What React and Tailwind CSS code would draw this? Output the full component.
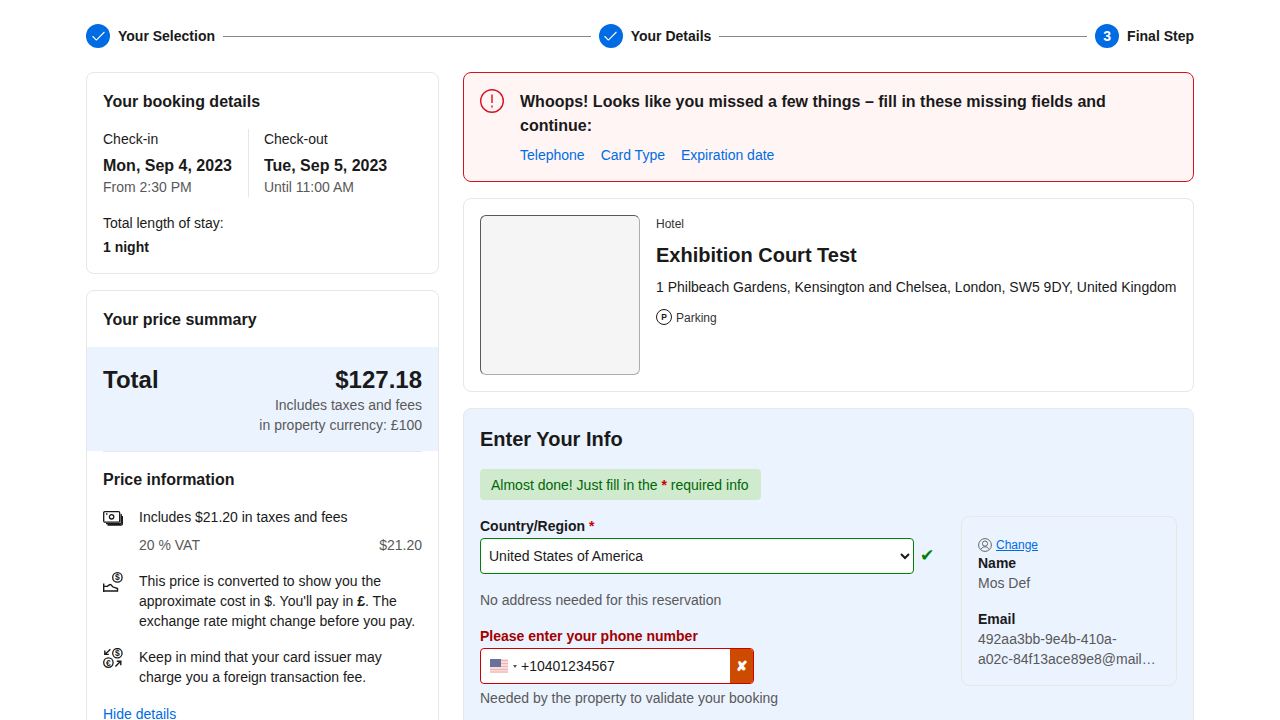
import { Check } from "lucide-react"

const steps = [
    { label: 'Your Selection', done: true },
    { label: 'Your Details', done: true },
    { label: 'Final Step', done: false },
]

function Stepper() {
    return (
        <div className="flex items-center h-6 mb-6">
            <div className="flex items-center shrink-0">
                <span className="w-6 h-6 rounded-full bg-[#006ce4] flex items-center justify-center text-white"><Check size={17} strokeWidth={1.5} /></span>
                <span className="ml-2 text-sm font-bold text-[#1a1a1a]">{steps[0].label}</span>
            </div>
            <div className="flex-1 h-px bg-[#868686] mx-2"></div>
            <div className="flex items-center shrink-0">
                <span className="w-6 h-6 rounded-full bg-[#006ce4] flex items-center justify-center text-white"><Check size={17} strokeWidth={1.5} /></span>
                <span className="ml-2 text-sm font-bold text-[#1a1a1a]">{steps[1].label}</span>
            </div>
            <div className="flex-1 h-px bg-[#868686] mx-2"></div>
            <div className="flex items-center shrink-0">
                <span className="w-6 h-6 rounded-full bg-[#006ce4] flex items-center justify-center text-white text-sm font-bold">3</span>
                <span className="ml-2 text-sm font-bold text-[#1a1a1a]">{steps[2].label}</span>
            </div>
        </div>
    )
}

function MoneyIcon() {
    return (
        <svg width="20" height="16" viewBox="0 0 20 16" fill="none" stroke="#1a1a1a" strokeWidth="1.3">
            <rect x="0.7" y="0.7" width="16" height="10.5" rx="1.2" />
            <circle cx="8.6" cy="5.8" r="2.2" />
            <path d="M3 3h1.5M18.2 3v8.5a1.2 1.2 0 0 1-1.2 1.2H3M19.4 5v7.8a1.2 1.2 0 0 1-1.2 1.2H4.5" />
        </svg>
    )
}

function DollarCoin({ cx, cy }) {
    return (
        <g>
            <circle cx={cx} cy={cy} r="4.7" fill="none" stroke="#1a1a1a" strokeWidth="1.3" />
            <text x={cx} y={cy + 3} textAnchor="middle" fontSize="8.5" fontWeight="700" fill="#1a1a1a" fontFamily="Liberation Sans">$</text>
        </g>
    )
}

function HandCoinIcon() {
    return (
        <svg width="20" height="20" viewBox="0 0 20 20" fill="none">
            <DollarCoin cx={14.4} cy={5.4} />
            <path d="M0.7 20V11.6M0.7 14.4h3.6l2.4-1.8c1.2-.4 2.2.8 3 2.2l4.8 1.8v2.4H.7" stroke="#1a1a1a" strokeWidth="1.4" />
        </svg>
    )
}

function ExchangeIcon() {
    return (
        <svg width="20" height="20" viewBox="0 0 20 20" fill="none">
            <DollarCoin cx={14.4} cy={5.2} />
            <circle cx="5.4" cy="14.6" r="4.7" stroke="#1a1a1a" strokeWidth="1.3" />
            <text x="5.4" y="17.6" textAnchor="middle" fontSize="8.5" fontWeight="700" fill="#1a1a1a" fontFamily="Liberation Sans">€</text>
            <path d="M7.4 1.2L2.4 6M1.8 2.4V6.4H5.8M12.4 18.6l5-5M13.8 13.2h4V17.2" stroke="#1a1a1a" strokeWidth="1.4" />
        </svg>
    )
}

function BookingDetails() {
    return (
        <div className="bg-white border border-[#e7e7e7] rounded-lg p-4 h-[202px]">
            <h2 className="text-base leading-6 font-bold text-[#1a1a1a] pt-px mb-[15px]">Your booking details</h2>
            <div className="flex">
                <div className="pr-4 border-r border-[#e7e7e7] shrink-0">
                    <div className="text-sm leading-5 text-[#1a1a1a]">Check-in</div>
                    <div className="text-base leading-6 font-bold text-[#1a1a1a] mt-[5px] whitespace-nowrap">Mon, Sep 4, 2023</div>
                    <div className="text-sm leading-5 text-[#595959] -mt-px">From 2:30 PM</div>
                </div>
                <div className="pl-[15px]">
                    <div className="text-sm leading-5 text-[#1a1a1a]">Check-out</div>
                    <div className="text-base leading-6 font-bold text-[#1a1a1a] mt-[5px] whitespace-nowrap">Tue, Sep 5, 2023</div>
                    <div className="text-sm leading-5 text-[#595959] -mt-px">Until 11:00 AM</div>
                </div>
            </div>
            <div className="text-sm leading-5 text-[#1a1a1a] mt-4">Total length of stay:</div>
            <div className="text-sm leading-5 font-bold text-[#1a1a1a] mt-1">1 night</div>
        </div>
    )
}

function PriceSummary() {
    return (
        <div className="bg-white border border-[#e7e7e7] rounded-lg mt-4 pb-4">
            <h2 className="text-base leading-6 font-bold text-[#1a1a1a] px-4 pt-[17px] mb-4 h-10">Your price summary</h2>
            <div className="bg-[#ebf3ff] px-4 pt-[17px] h-[104px]">
                <div className="flex justify-between items-start">
                    <span className="text-2xl leading-8 font-bold text-[#1a1a1a]">Total</span>
                    <span className="text-2xl leading-8 font-bold text-[#1a1a1a]">$127.18</span>
                </div>
                <div className="text-sm leading-5 text-[#595959] text-right -mt-px">Includes taxes and fees</div>
                <div className="text-sm leading-5 text-[#595959] text-right">in property currency: £100</div>
            </div>
            <div className="mx-4 h-px bg-[#e7e7e7]"></div>
            <div className="px-4 pt-4">
                <h3 className="text-base leading-6 font-bold text-[#1a1a1a]">Price information</h3>
                <div className="flex mt-[15px]">
                    <div className="w-9 shrink-0 pt-1"><MoneyIcon /></div>
                    <div className="flex-1">
                        <div className="text-sm leading-5 text-[#1a1a1a]">Includes $21.20 in taxes and fees</div>
                        <div className="flex justify-between text-sm leading-5 text-[#595959] mt-2">
                            <span>20 % VAT</span>
                            <span>$21.20</span>
                        </div>
                    </div>
                </div>
                <div className="flex mt-4">
                    <div className="w-9 shrink-0 pt-px"><HandCoinIcon /></div>
                    <div className="flex-1 text-sm leading-5 text-[#1a1a1a]">
                        This price is converted to show you the approximate cost in $. You'll pay in <b>£</b>. The exchange rate might change before you pay.
                    </div>
                </div>
                <div className="flex mt-4">
                    <div className="w-9 shrink-0 pt-px"><ExchangeIcon /></div>
                    <div className="flex-1 text-sm leading-5 text-[#1a1a1a]">
                        Keep in mind that your card issuer may charge you a foreign transaction fee.
                    </div>
                </div>
                <a className="block text-sm leading-5 text-[#006ce4] mt-[17px]">Hide details</a>
            </div>
        </div>
    )
}

function ErrorBanner() {
    return (
        <div className="bg-[#fff5f5] border border-[#d4111e] rounded-lg p-4 flex h-[110px]">
            <svg width="24" height="24" viewBox="0 0 24 24" fill="none" className="shrink-0">
                <circle cx="12" cy="12" r="11.3" stroke="#d4111e" strokeWidth="1.4" />
                <path d="M12 5.5v8.5M12 16.5v2" stroke="#d4111e" strokeWidth="1.4" />
            </svg>
            <div className="ml-4 pt-px">
                <div className="text-base leading-6 font-bold text-[#1a1a1a]">Whoops! Looks like you missed a few things – fill in these missing fields and continue:</div>
                <div className="flex gap-4 text-sm leading-5 text-[#006ce4] mt-[7px]">
                    <a>Telephone</a>
                    <a>Card Type</a>
                    <a>Expiration date</a>
                </div>
            </div>
        </div>
    )
}

function HotelCard() {
    return (
        <div className="bg-white border border-[#e7e7e7] rounded-lg p-4 mt-4 flex h-[194px]">
            <div className="w-40 h-40 shrink-0 bg-[#f5f5f5] rounded-md border-l border-t border-l-[#595959] border-t-[#595959] border-r border-b border-r-[#adadad] border-b-[#adadad]"></div>
            <div className="ml-4">
                <div className="text-xs leading-[18px] text-[#333333]">Hotel</div>
                <h1 className="text-xl leading-7 font-bold text-[#1a1a1a] mt-2">Exhibition Court Test</h1>
                <div className="text-sm leading-5 text-[#1a1a1a] mt-2">1 Philbeach Gardens, Kensington and Chelsea, London, SW5 9DY, United Kingdom</div>
                <div className="flex items-center mt-3">
                    <svg width="16" height="16" viewBox="0 0 16 16" fill="none" className="-mt-[2px]">
                        <circle cx="8" cy="8" r="7.5" stroke="#1a1a1a" strokeWidth="1" />
                        <text x="8" y="11" textAnchor="middle" fontSize="8.5" fontWeight="700" fill="#1a1a1a" fontFamily="Liberation Sans">P</text>
                    </svg>
                    <span className="text-xs leading-[18px] text-[#333333] ml-1">Parking</span>
                </div>
            </div>
        </div>
    )
}

function UsFlag() {
    return (
        <svg width="18" height="14" viewBox="0 0 18 14" className="shrink-0">
            <rect width="18" height="14" fill="#f8dcdc" />
            <path d="M0 1.5h18M0 4.5h18M0 7.5h18M0 10.5h18M0 13h18" stroke="#f0b4b4" strokeWidth="1" />
            <rect width="11" height="8" fill="#6a7198" />
        </svg>
    )
}

function InfoForm() {
    return (
        <div className="bg-[#ebf3ff] border border-[#e7e7e7] rounded-lg mt-4 p-4 h-[400px]">
            <h2 className="text-xl leading-7 font-bold text-[#1a1a1a]">Enter Your Info</h2>
            <div className="w-fit h-[31px] bg-[#cfeacd] text-sm leading-[33px] text-[#006607] rounded-[4px] pl-[11px] pr-3 mt-4">
                Almost done! Just fill in the <b className="text-[#c00]">*</b> required info
            </div>
            <div className="flex mt-4">
                <div className="w-[453px] shrink-0">
                    <label className="block text-sm leading-5 font-bold text-[#1a1a1a] mb-[2px]">Country/Region <span className="text-[#c00]">*</span></label>
                    <div className="flex items-center">
                        <select defaultValue="us" className="w-[434px] shrink-0 h-9 bg-white border border-[#008009] rounded-[4px] pl-1 text-sm text-[#1a1a1a] outline-none">
                            <option value="us">United States of America</option>
                        </select>
                        <span className="ml-[6px] text-[#008009] text-[17px]">✔</span>
                    </div>
                    <div className="text-sm leading-5 text-[#595959] mt-4">No address needed for this reservation</div>
                    <div className="text-sm leading-5 font-bold text-[#a30000] mt-4">Please enter your phone number</div>
                    <div className="w-[274px] h-9 mt-[2px] bg-white border border-[#c00] rounded-[4px] flex items-center overflow-hidden">
                        <div className="flex items-center flex-1 pl-[9px]">
                            <UsFlag />
                            <span className="w-0 h-0 ml-[5px] border-l-2 border-r-2 border-t-[3px] border-l-transparent border-r-transparent border-t-[#555]"></span>
                            <span className="text-sm text-[#1a1a1a] ml-1">+10401234567</span>
                        </div>
                        <div className="w-[23px] h-full bg-[#cc4b00] flex items-center justify-center">
                            <span className="text-white text-sm font-bold">✘</span>
                        </div>
                    </div>
                    <div className="text-sm leading-5 text-[#595959] mt-1">Needed by the property to validate your booking</div>
                </div>
                <div className="ml-7 w-[216px] h-[170px] border border-[#e7e7e7] rounded-lg px-4 pt-[19px]">
                    <div className="flex items-center h-[17px]">
                        <svg width="14" height="14" viewBox="0 0 14 14" fill="none" stroke="#595959" strokeWidth="0.9">
                            <circle cx="7" cy="7" r="6.4" />
                            <circle cx="7" cy="5.6" r="2.6" />
                            <path d="M3 11.4c1-2 2.4-2.6 4-2.6s3 .6 4 2.6" />
                        </svg>
                        <a className="text-xs leading-4 text-[#006ce4] underline ml-1">Change</a>
                    </div>
                    <div className="text-sm leading-5 font-bold text-[#1a1a1a]">Name</div>
                    <div className="text-sm leading-5 text-[#595959]">Mos Def</div>
                    <div className="text-sm leading-5 font-bold text-[#1a1a1a] mt-4">Email</div>
                    <div className="text-sm leading-5 text-[#595959]">492aa3bb-9e4b-410a-</div>
                    <div className="text-sm leading-5 text-[#595959] w-[178px] truncate">a02c-84f13ace89e8@mailinator.com</div>
                </div>
            </div>
        </div>
    )
}

export default function App() {
    return (
        <div className="w-[1280px] h-[720px] overflow-hidden bg-white font-['Liberation_Sans',Arial,sans-serif]">
            <div className="px-[86px] pt-6">
                <Stepper />
                <div className="flex gap-6">
                    <div className="w-[353px] shrink-0">
                        <BookingDetails />
                        <PriceSummary />
                    </div>
                    <div className="flex-1 min-w-0">
                        <ErrorBanner />
                        <HotelCard />
                        <InfoForm />
                    </div>
                </div>
            </div>
        </div>
    )
}
